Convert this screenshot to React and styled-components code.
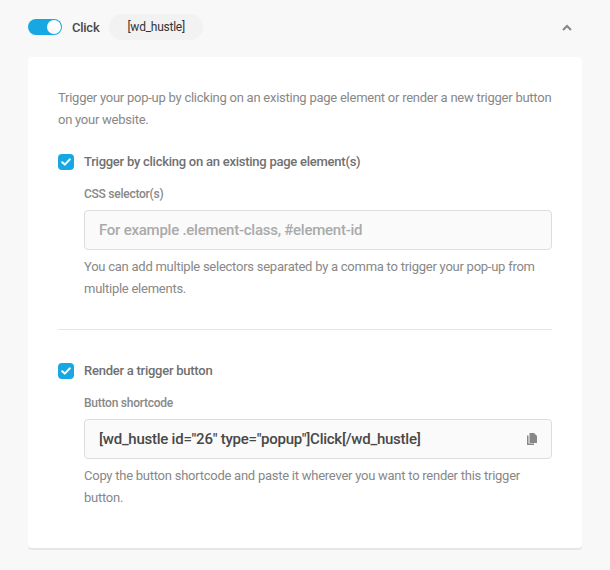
import React from "react";
import styled, { createGlobalStyle } from "styled-components";

const Global = createGlobalStyle`
  html, body { margin: 0; padding: 0; background: #f8f8f8; }
  body { font-family: Roboto, "Liberation Sans", sans-serif; width: 610px; height: 570px; overflow: hidden; }
  * { box-sizing: border-box; }
`;
const Page = styled.div`padding: 0 28px;`;
const Header = styled.div`
  display: flex; align-items: center; height: 57px; padding: 0 10px 3px 0;
`;
const Toggle = styled.span`
  position: relative; width: 34px; height: 16px; border-radius: 8px; background: #17a8e3; flex: none;
  &::after { content: ""; position: absolute; right: 1px; top: 1px; width: 14px; height: 14px; border-radius: 50%; background: #fff; }
`;
const Title = styled.span`margin-left: 10px; font-size: 13px; font-weight: 500; letter-spacing: -0.25px; color: #4a4a4a;`;
const Tag = styled.span`
  margin-left: 10px; height: 26px; padding: 0 18px; border-radius: 13px; background: #f2f2f2;
  font-size: 12px; line-height: 26px; letter-spacing: -0.25px; color: #333;
`;
const Chevron = styled.svg`margin-left: auto; width: 10px; height: 7px; color: #888;`;
const Card = styled.div`
  height: 491px; padding: 30px 30px 0; background: #fff; border-radius: 4px; box-shadow: 0 2px 0 #e6e6e6;
`;
const Text = styled.p`margin: 0; font-size: 13px; line-height: 22px; letter-spacing: -0.25px; color: #888;`;
const CheckRow = styled.label`display: flex; align-items: center; gap: 10px; margin-top: ${p => p.$top}px;`;
const Box = styled.span`
  width: 16px; height: 16px; border-radius: 4px; background: #17a8e3; display: flex; align-items: center; justify-content: center;
`;
const CheckLabel = styled.span`font-size: 13px; font-weight: 500; letter-spacing: -0.25px; color: #707070; line-height: 22px;`;
const Nested = styled.div`margin-left: 26px;`;
const FieldLabel = styled.div`margin-top: ${p => p.$top}px; font-size: 12px; font-weight: 500; letter-spacing: -0.25px; color: #888; line-height: 16px;`;
const Field = styled.div`
  margin: 8px 0 6px; height: 40px; display: flex; align-items: center; justify-content: space-between;
  padding: 0 14px; background: #fafafa; border: 1px solid #ddd; border-radius: 4px;
  font-size: 15px; font-weight: 500; letter-spacing: -0.25px; color: ${p => p.$filled ? "#484848" : "#aaa"};
`;
const Rule = styled.hr`border: 0; border-top: 1px solid #e6e6e6; margin: 29px 0 30px;`;
const Check = () => <svg width="10" height="8" viewBox="0 0 10 8"><path d="M1.2 4.2l2.6 2.4 5-5.2" stroke="#fff" strokeWidth="2" strokeLinecap="round" strokeLinejoin="round" fill="none"/></svg>;
const CopyIcon = () => <svg width="10" height="12" viewBox="0 0 10 12"><path d="M0 2.5h1.5V10.5H7V12H0z" fill="#888"/><path d="M2.5 0H7l3 3v7H2.5z" fill="#888"/></svg>;
export default function App() {
  return <Page><Global/>
    <Header>
      <Toggle/><Title>Click</Title><Tag>[wd_hustle]</Tag>
      <Chevron viewBox="0 0 10 7"><path d="M1 6l4-4 4 4" stroke="currentColor" strokeWidth="2" fill="none"/></Chevron>
    </Header>
    <Card>
      <Text>Trigger your pop-up by clicking on an existing page element or render a new trigger button on your website.</Text>
      <CheckRow $top={20}><Box><Check/></Box><CheckLabel>Trigger by clicking on an existing page element(s)</CheckLabel></CheckRow>
      <Nested>
        <FieldLabel $top={13}>CSS selector(s)</FieldLabel>
        <Field>For example .element-class, #element-id</Field>
        <Text>You can add multiple selectors separated by a comma to trigger your pop-up from multiple elements.</Text>
      </Nested>
      <Rule/>
      <CheckRow $top={0}><Box><Check/></Box><CheckLabel>Render a trigger button</CheckLabel></CheckRow>
      <Nested>
        <FieldLabel $top={13}>Button shortcode</FieldLabel>
        <Field $filled>[wd_hustle id="26" type="popup"]Click[/wd_hustle]
          <CopyIcon/>
        </Field>
        <Text>Copy the button shortcode and paste it wherever you want to render this trigger button.</Text>
      </Nested>
    </Card>
  </Page>;
}
